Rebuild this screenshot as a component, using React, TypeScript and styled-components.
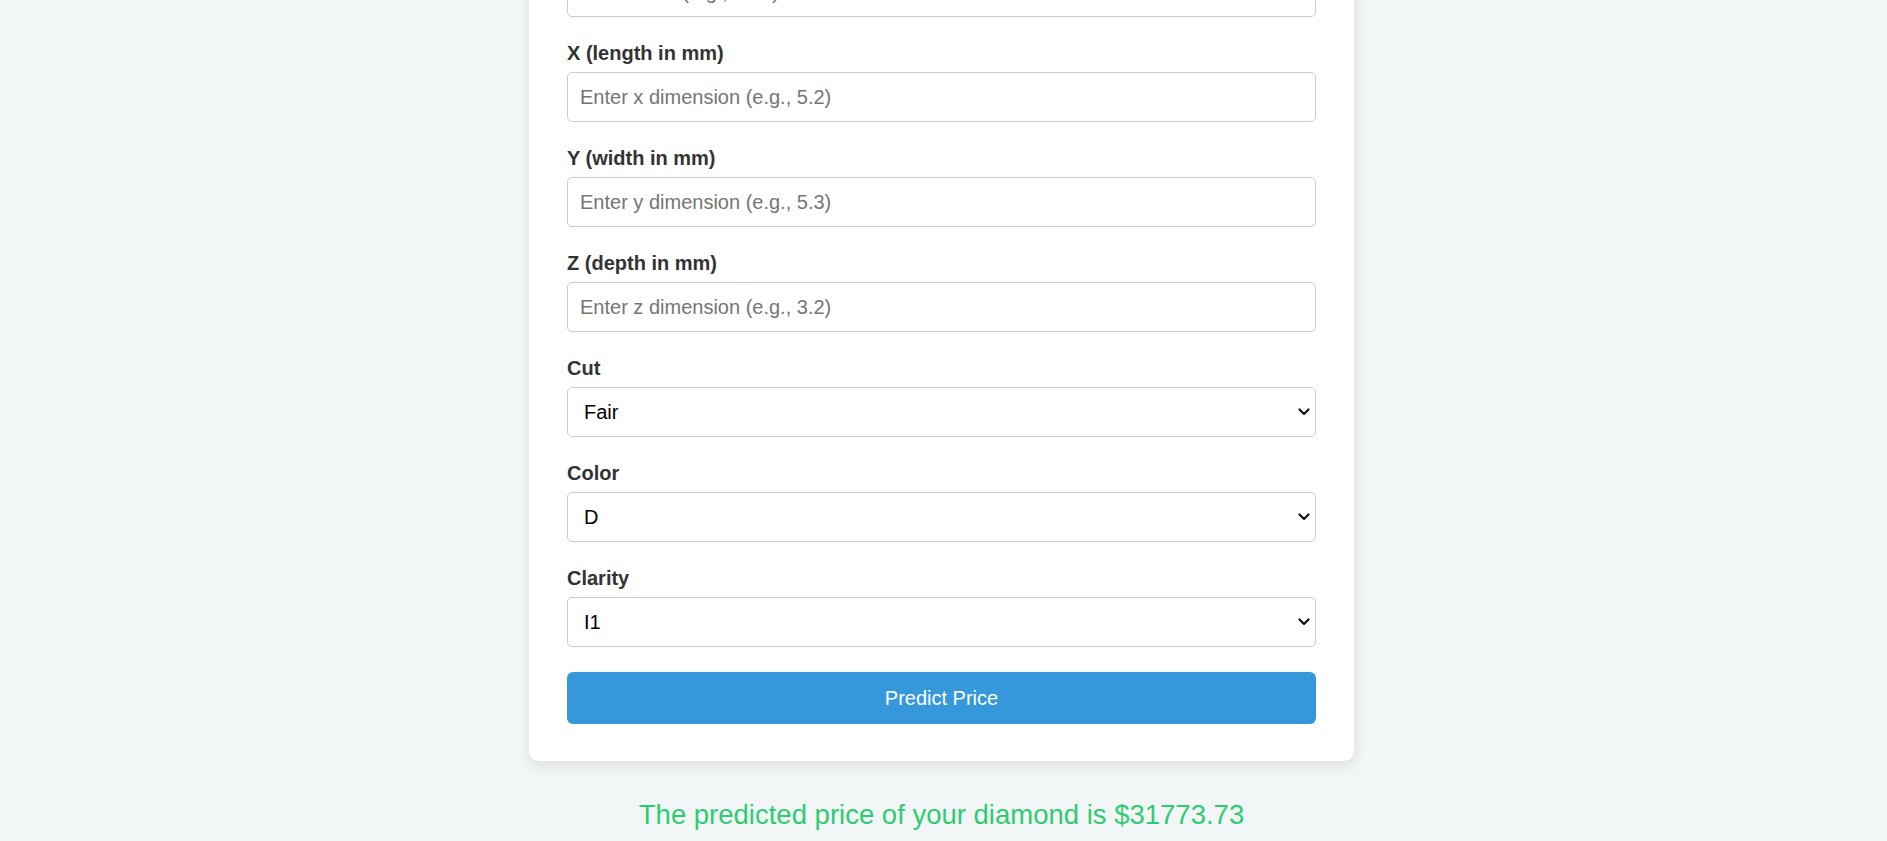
import React from "react";
import styled, { createGlobalStyle } from "styled-components";

const GlobalStyle = createGlobalStyle`
  html, body {
    margin: 0;
    padding: 0;
    background: #f2f6f7;
    font-family: "Liberation Sans", Arial, sans-serif;
    scrollbar-width: none;
  }
  html::-webkit-scrollbar, body::-webkit-scrollbar { display: none; }
  * { box-sizing: border-box; }
`;

const Page = styled.div`
  height: 100vh;
  overflow: hidden;
  display: flex;
  flex-direction: column;
  justify-content: flex-end;
  align-items: center;
  padding: 0 4px 10px 0;
`;

const Card = styled.form`
  flex-shrink: 0;
  width: 825px;
  background: #ffffff;
  border-radius: 10px;
  box-shadow: 0 4px 14px rgba(0, 0, 0, 0.1);
  padding: 38px 38px 37px 38px;
  display: flex;
  flex-direction: column;
`;

const Title = styled.h1`
  margin: 0 0 30px 0;
  text-align: center;
  font-size: 38px;
  color: #333;
`;

const Group = styled.div`
  display: flex;
  flex-direction: column;
  margin-bottom: 25px;
  &:last-of-type {
    margin-bottom: 0;
  }
`;

const Label = styled.label`
  display: block;
  font-size: 20px;
  line-height: 23px;
  font-weight: bold;
  color: #333;
  margin-bottom: 7px;
`;

const TextInput = styled.input`
  width: 100%;
  height: 50px;
  padding: 0 12px;
  font-family: "Liberation Sans", Arial, sans-serif;
  font-size: 20px;
  border: 1px solid #ccc;
  border-radius: 5px;
  background: #fff;
  color: #000;
  &::placeholder {
    color: #757575;
  }
`;

const SelectWrap = styled.div`
  position: relative;
  width: 100%;
`;

const Select = styled.select`
  appearance: none;
  -webkit-appearance: none;
  width: 100%;
  height: 50px;
  padding: 0 30px 0 16px;
  font-family: "Liberation Sans", Arial, sans-serif;
  font-size: 20px;
  border: 1px solid #ccc;
  border-radius: 5px;
  background: #fff;
  color: #000;
`;

const Chevron = styled.svg`
  position: absolute;
  right: 6px;
  top: 50%;
  width: 12px;
  height: 8px;
  margin-top: -4px;
  pointer-events: none;
`;

const Button = styled.button`
  margin-top: 25px;
  width: 100%;
  height: 52px;
  border: none;
  border-radius: 6px;
  background: #3498db;
  color: #fff;
  font-family: "Liberation Sans", Arial, sans-serif;
  font-size: 20px;
  cursor: pointer;
`;

const Result = styled.p`
  flex-shrink: 0;
  margin: 38px 0 0 0;
  font-size: 27.5px;
  line-height: 32px;
  color: #2ecc71;
  text-align: center;
`;

const textFields = [
  { id: "carat", label: "Carat", ph: "Enter carat weight (e.g., 0.7)" },
  { id: "depth", label: "Depth (%)", ph: "Enter depth (e.g., 61.5)" },
  { id: "table", label: "Table (%)", ph: "Enter table (e.g., 57.0)" },
  { id: "x", label: "X (length in mm)", ph: "Enter x dimension (e.g., 5.2)" },
  { id: "y", label: "Y (width in mm)", ph: "Enter y dimension (e.g., 5.3)" },
  { id: "z", label: "Z (depth in mm)", ph: "Enter z dimension (e.g., 3.2)" },
];

const selectFields = [
  { id: "cut", label: "Cut", options: ["Fair", "Good", "Very Good", "Premium", "Ideal"] },
  { id: "color", label: "Color", options: ["D", "E", "F", "G", "H", "I", "J"] },
  { id: "clarity", label: "Clarity", options: ["I1", "SI2", "SI1", "VS2", "VS1", "VVS2", "VVS1", "IF"] },
];

export default function App() {
  return (
    <>
      <GlobalStyle />
      <Page>
        <Card onSubmit={(e) => e.preventDefault()}>
          <Title>Diamond Price Prediction</Title>
          {textFields.map((f) => (
            <Group key={f.id}>
              <Label htmlFor={f.id}>{f.label}</Label>
              <TextInput id={f.id} type="text" placeholder={f.ph} />
            </Group>
          ))}
          {selectFields.map((f) => (
            <Group key={f.id}>
              <Label htmlFor={f.id}>{f.label}</Label>
              <SelectWrap>
                <Select id={f.id} defaultValue={f.options[0]}>
                  {f.options.map((o) => (
                    <option key={o} value={o}>
                      {o}
                    </option>
                  ))}
                </Select>
                <Chevron viewBox="0 0 12 8" aria-hidden="true">
                  <polyline
                    points="1.5,1.5 6,6 10.5,1.5"
                    fill="none"
                    stroke="#111"
                    strokeWidth="2.2"
                    strokeLinecap="round"
                    strokeLinejoin="round"
                  />
                </Chevron>
              </SelectWrap>
            </Group>
          ))}
          <Button type="submit">Predict Price</Button>
        </Card>
        <Result>The predicted price of your diamond is $31773.73</Result>
      </Page>
    </>
  );
}
